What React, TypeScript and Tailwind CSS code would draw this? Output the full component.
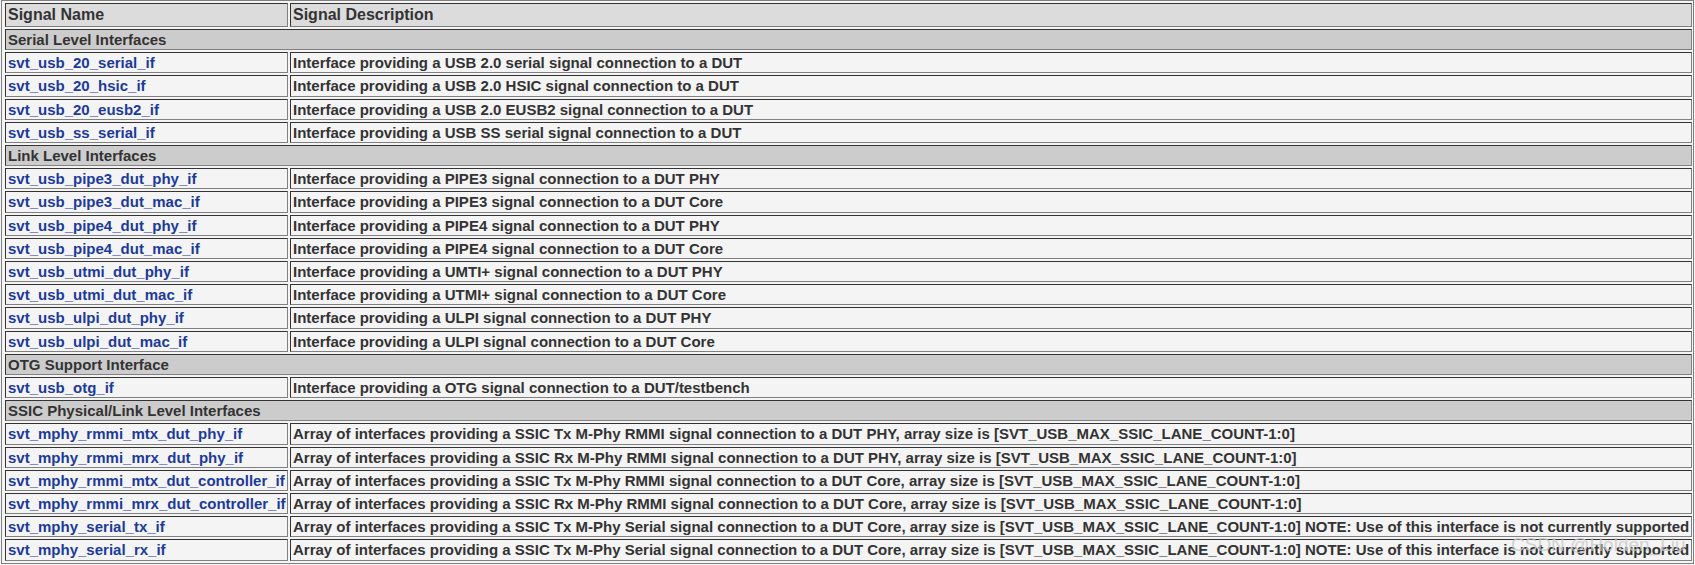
import React from "react";

type Row =
  | { kind: "section"; title: string }
  | { kind: "item"; name: string; desc: string };

const NOTE = " NOTE: Use of this interface is not currently supported";
const ARR = ", array size is [SVT_USB_MAX_SSIC_LANE_COUNT-1:0]";

const rows: Row[] = [
  { kind: "section", title: "Serial Level Interfaces" },
  { kind: "item", name: "svt_usb_20_serial_if", desc: "Interface providing a USB 2.0 serial signal connection to a DUT" },
  { kind: "item", name: "svt_usb_20_hsic_if", desc: "Interface providing a USB 2.0 HSIC signal connection to a DUT" },
  { kind: "item", name: "svt_usb_20_eusb2_if", desc: "Interface providing a USB 2.0 EUSB2 signal connection to a DUT" },
  { kind: "item", name: "svt_usb_ss_serial_if", desc: "Interface providing a USB SS serial signal connection to a DUT" },
  { kind: "section", title: "Link Level Interfaces" },
  { kind: "item", name: "svt_usb_pipe3_dut_phy_if", desc: "Interface providing a PIPE3 signal connection to a DUT PHY" },
  { kind: "item", name: "svt_usb_pipe3_dut_mac_if", desc: "Interface providing a PIPE3 signal connection to a DUT Core" },
  { kind: "item", name: "svt_usb_pipe4_dut_phy_if", desc: "Interface providing a PIPE4 signal connection to a DUT PHY" },
  { kind: "item", name: "svt_usb_pipe4_dut_mac_if", desc: "Interface providing a PIPE4 signal connection to a DUT Core" },
  { kind: "item", name: "svt_usb_utmi_dut_phy_if", desc: "Interface providing a UMTI+ signal connection to a DUT PHY" },
  { kind: "item", name: "svt_usb_utmi_dut_mac_if", desc: "Interface providing a UTMI+ signal connection to a DUT Core" },
  { kind: "item", name: "svt_usb_ulpi_dut_phy_if", desc: "Interface providing a ULPI signal connection to a DUT PHY" },
  { kind: "item", name: "svt_usb_ulpi_dut_mac_if", desc: "Interface providing a ULPI signal connection to a DUT Core" },
  { kind: "section", title: "OTG Support Interface" },
  { kind: "item", name: "svt_usb_otg_if", desc: "Interface providing a OTG signal connection to a DUT/testbench" },
  { kind: "section", title: "SSIC Physical/Link Level Interfaces" },
  { kind: "item", name: "svt_mphy_rmmi_mtx_dut_phy_if", desc: "Array of interfaces providing a SSIC Tx M-Phy RMMI signal connection to a DUT PHY" + ARR },
  { kind: "item", name: "svt_mphy_rmmi_mrx_dut_phy_if", desc: "Array of interfaces providing a SSIC Rx M-Phy RMMI signal connection to a DUT PHY" + ARR },
  { kind: "item", name: "svt_mphy_rmmi_mtx_dut_controller_if", desc: "Array of interfaces providing a SSIC Tx M-Phy RMMI signal connection to a DUT Core" + ARR },
  { kind: "item", name: "svt_mphy_rmmi_mrx_dut_controller_if", desc: "Array of interfaces providing a SSIC Rx M-Phy RMMI signal connection to a DUT Core" + ARR },
  { kind: "item", name: "svt_mphy_serial_tx_if", desc: "Array of interfaces providing a SSIC Tx M-Phy Serial signal connection to a DUT Core" + ARR + NOTE },
  { kind: "item", name: "svt_mphy_serial_rx_if", desc: "Array of interfaces providing a SSIC Tx M-Phy Serial signal connection to a DUT Core" + ARR + NOTE },
];

const cell =
  "border border-solid border-t-[#333333] border-l-[#333333] border-r-[#808080] border-b-[#808080] px-[2px] whitespace-nowrap";

export default function App() {
  return (
    <div
      className="relative w-[1695px] h-[565px] bg-[#f4f4f4] overflow-hidden font-bold text-[#333333]"
      style={{ fontFamily: '"Liberation Sans", Arial, sans-serif' }}
    >
      <div className="ml-[1px] mt-[0px] w-[1693px] border border-[#808080] pt-[2px] pb-[2px] pl-[3px] pr-[1px]">
        <div className="grid grid-cols-[283px_1fr] gap-[2px]">
          <div className={`${cell} bg-[#dcdcdc] text-[16px] leading-[22px]`}>Signal Name</div>
          <div className={`${cell} bg-[#dcdcdc] text-[16px] leading-[22px]`}>Signal Description</div>
          {rows.map((r, i) =>
            r.kind === "section" ? (
              <div key={i} className={`${cell} col-span-2 bg-[#cccccc] text-[15px] leading-[19.2px]`}>
                {r.title}
              </div>
            ) : (
              <React.Fragment key={i}>
                <div className={`${cell} bg-[#f4f4f4] text-[15px] leading-[19.2px] text-[#1c3a9c]`}>{r.name}</div>
                <div className={`${cell} bg-[#f4f4f4] text-[15px] leading-[19.2px]`}>{r.desc}</div>
              </React.Fragment>
            )
          )}
        </div>
      </div>
      <div className="absolute left-[1511px] top-[535px] text-[19px] leading-[20px] font-normal text-[rgba(200,200,200,0.8)] whitespace-nowrap pointer-events-none">
        CSDN @Holden_Liu
      </div>
    </div>
  );
}
